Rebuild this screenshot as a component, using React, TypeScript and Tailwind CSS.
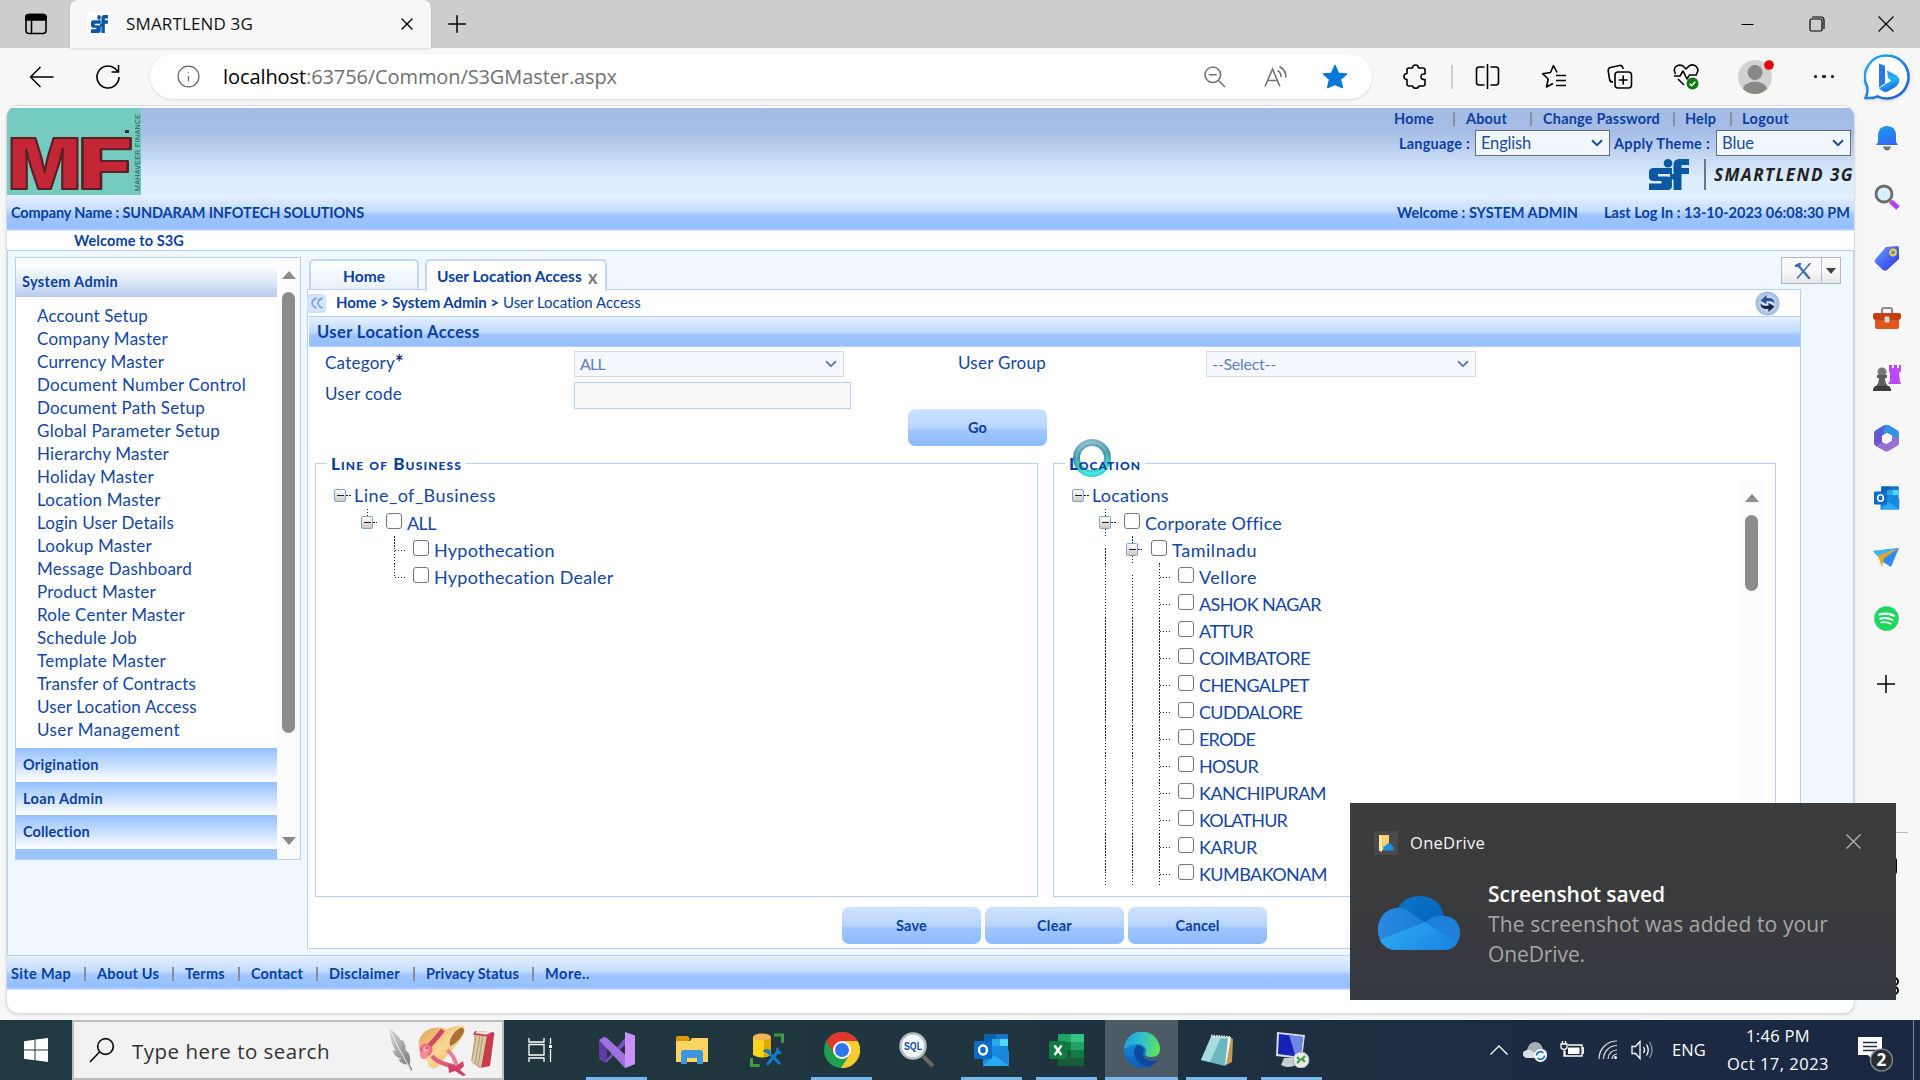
import React, { useLayoutEffect, useRef, useState } from "react";
import { X, Plus, Info, Minus } from "lucide-react";

/** Text run whose tracking is adjusted so it spans the given width. */
function Fit({ w, className = "", children }: { w: number; className?: string; children: string }) {
  const ref = useRef<HTMLSpanElement>(null);
  const [ls, setLs] = useState(0);
  useLayoutEffect(() => {
    if (ref.current) {
      const natural = ref.current.getBoundingClientRect().width;
      setLs((w - natural) / children.length);
    }
  }, [w, children]);
  return (
    <span className={"block shrink-0 whitespace-nowrap " + className} style={{ width: w }}>
      <span ref={ref} style={{ letterSpacing: ls }}>{children}</span>
    </span>
  );
}

const Sep = () => <span className="h-[14px] w-[2px] shrink-0 bg-[#8a8f99]" />;

function Chevron({ className = "" }: { className?: string }) {
  return (
    <svg className={className} width="12" height="8" viewBox="0 0 12 8" fill="none" stroke="currentColor" strokeWidth="2">
      <path d="M1 1.200l5 5 5-5" />
    </svg>
  );
}

/* ---------- browser chrome ---------- */

function SfMark({ w, h }: { w: number; h: number }) {
  return (
    <svg width={w} height={h} viewBox="0 0 40 31" preserveAspectRatio="none" fill="#0a58a2">
      <path d="M5 9h18v6H9v2.500h9q5 0 5 4.500v5q0 4-5 4H0v-6.500h12.500V22H5q-5 0-5-4v-5q0-4 5-4z" />
      <circle cx="19" cy="4.300" r="4.300" />
      <path d="M24.500 31V20.500H21V15h3.500V6q0-6 6-6H40v6h-7.500V9H40v6h-7.500v16z" />
    </svg>
  );
}

function TabStrip() {
  return (
    <div className="flex h-[48px] bg-[#cdcdcd]">
      <div className="flex w-[70px] items-center justify-center pl-[2px]">
        <svg width="22" height="22" viewBox="0 0 22 22" fill="none" stroke="#000" strokeWidth="1.600">
          <rect x="1" y="1.500" width="20" height="19" rx="3" />
          <path d="M1 7V4q0-2.500 3-2.500h14q3 0 3 2.500v3z" fill="#000" />
          <path d="M6.500 7v13" />
        </svg>
      </div>
      <div className="flex w-[361px] items-center rounded-t-[8px] bg-[#f7f7f7] pl-[17px] shadow">
        <span className="flex h-[24px] w-[24px] items-center justify-center bg-white"><SfMark w={17} h={18} /></span>
        <Fit w={127} className="ml-[15px] text-[17px] text-[#111]">SMARTLEND 3G</Fit>
        <X className="ml-[144px]" size={20} strokeWidth={1.6} />
      </div>
      <Plus className="ml-[12px] mt-[10px]" size={28} strokeWidth={1.3} />
      <div className="ml-auto flex items-center">
        <div className="flex w-[69px] justify-center"><Minus size={19} strokeWidth={1.3} /></div>
        <div className="flex w-[69px] justify-center">
          <svg width="16" height="16" viewBox="0 0 16 16" fill="none" stroke="#000" strokeWidth="1.200">
            <rect x="1" y="3" width="12" height="12" rx="1.500" /><path d="M3 1h9q3 0 3 3v9" />
          </svg>
        </div>
        <div className="flex w-[69px] justify-center">
          <svg width="16" height="16" viewBox="0 0 16 16" stroke="#000" strokeWidth="1.200"><path d="M.5.5l15 15M15.500.5l-15 15" /></svg>
        </div>
      </div>
    </div>
  );
}

function BingIcon() {
  return (
    <svg width="46" height="46" viewBox="0 0 46 46" className="drop-shadow">
      <defs>
        <linearGradient id="bg1" x1="0" y1="0" x2="1" y2="1"><stop offset="0" stopColor="#18b5ee" /><stop offset="1" stopColor="#2352d8" /></linearGradient>
        <linearGradient id="bg2" x1="0" y1="0" x2="0.4" y2="1"><stop offset="0" stopColor="#2b8df5" /><stop offset="0.6" stopColor="#20b6ee" /><stop offset="1" stopColor="#2166e8" /></linearGradient>
      </defs>
      <path d="M23 1.500a21.500 21.500 0 1 1-9.500 40.800c-3 1.600-7.500 2-12 1.600 2-3 2.400-6 1.800-11A21.500 21.500 0 0 1 23 1.500z" fill="#fff" stroke="url(#bg1)" strokeWidth="2.500" />
      <path d="M15 9.500l6 2.200v17.500l-6 4.200z" fill="#2c77ee" />
      <path d="M23 16.500l9 4.500q4 2.500 3 7-1 3.500-4 5.300l-7 4q-3 1.500-6-.5l-3-2.500 12-7.500-3-3z" fill="url(#bg2)" />
    </svg>
  );
}

function Toolbar() {
  return (
    <div className="flex h-[57px] items-center bg-[#f7f7f7] text-black">
      <div className="flex w-[84px] justify-center pr-[1px]">
        <svg width="25" height="22" viewBox="0 0 25 22" fill="none" stroke="#000" strokeWidth="1.500"><path d="M24.500 11H1.500M11.500 1L1.500 11l10 10" /></svg>
      </div>
      <div className="flex w-[48px] justify-center">
        <svg width="26" height="26" viewBox="0 0 26 26" fill="none" stroke="#000" strokeWidth="1.600"><path d="M24 13a11 11 0 1 1-4.300-8.700L23 7.500M23.500 1v7H16.500" /></svg>
      </div>
      <div className="ml-[18px] flex h-[45px] w-[1222px] items-center rounded-full bg-white pl-[26px] shadow-sm">
        <Info size={25} strokeWidth={1.2} className="text-[#666]" />
        <div className="ml-[22px] flex text-[20px]">
          <Fit w={83} className="text-black">localhost</Fit>
          <Fit w={311} className="text-[#707070]">:63756/Common/S3GMaster.aspx</Fit>
        </div>
        <div className="ml-auto flex items-center">
          <div className="flex w-[60px] justify-center">
            <svg width="22" height="22" viewBox="0 0 22 22" fill="none" stroke="#707070" strokeWidth="1.500"><circle cx="8.800" cy="8.800" r="7.800" /><path d="M14.500 14.500l6.500 6.500M4.800 8.800h8" /></svg>
          </div>
          <div className="flex w-[60px] justify-center pl-[1px]">
            <svg width="24" height="23" viewBox="0 0 24 23" fill="none" stroke="#707070" strokeWidth="1.500">
              <path d="M1 21.500L8.500 4 16 21.500M4 15.500h9.500M13.500 5.500q3.500 2 3.500 6.500M15.500 1.500q6.500 3.500 6.500 11" />
            </svg>
          </div>
          <div className="mr-[7px] flex w-[60px] justify-center">
            <svg width="26" height="25" viewBox="0 0 26 25" fill="#0078d9" stroke="#0078d9" strokeWidth="1.500" strokeLinejoin="round"><path d="M13 1.500l3.400 7.700 8.100.8-6.100 5.400 1.900 8.100-7.300-3.200-7.300 3.200 1.900-8.100L1.500 10l8.100-.8z" /></svg>
          </div>
        </div>
      </div>
      <div className="ml-[10px] flex w-[66px] justify-center pl-[1px]">
        <svg width="25" height="25" viewBox="0 0 25 25" fill="none" stroke="#000" strokeWidth="1.600" strokeLinejoin="round">
          <path d="M6 4h3.500q0-3 3-3t3 3H20q2 0 2 2v4q-4-.5-4 2.700T22 15.500V20q0 2-2 2h-4q-.5 2.300-3.200 2.300T9.500 22H6q-2 0-2-2v-4.500q-3 0-3-3t3-3V6q0-2 2-2z" />
        </svg>
      </div>
      <div className="flex w-[8px] justify-center"><span className="h-[24px] w-[1.500px] bg-[#cfcfcf]" /></div>
      <div className="flex w-[62px] justify-center">
        <svg width="25" height="25" viewBox="0 0 25 25" fill="none" stroke="#000" strokeWidth="1.600"><path d="M9.500 3H4Q1.500 3 1.500 5.500v13Q1.500 21 4 21h5.500M15.500 3H21q2.500 0 2.500 2.500v13q0 2.500-2.500 2.500h-5.500M12.500 0v25" /></svg>
      </div>
      <div className="flex w-[72px] justify-center">
        <svg width="26" height="25" viewBox="0 0 26 25" fill="none" stroke="#000" strokeWidth="1.600" strokeLinejoin="round"><path d="M16 8.500L12.500 1.500 9.500 8.500l-8 1.200 5.700 5.300L5.500 23l6.500-3.500M15 11.500h10M15 16.500h10M15 21.500h10" /></svg>
      </div>
      <div className="flex w-[60px] justify-center">
        <svg width="26" height="25" viewBox="0 0 26 25" fill="none" stroke="#000" strokeWidth="1.600">
          <path d="M6 18q-3 0-3.400-2.500L1.200 7Q1 4 3.500 3.500l9-2Q15 1 15.800 3.500L16 5" />
          <rect x="8" y="8" width="16.500" height="16" rx="3" /><path d="M16.200 11.500v9M11.700 16h9" />
        </svg>
      </div>
      <div className="flex w-[72px] justify-center">
        <svg width="26" height="27" viewBox="0 0 26 27" fill="none" stroke="#000" strokeWidth="1.600" strokeLinejoin="round">
          <path d="M2.500 11Q0 6 3 3.500T10 3l3 3 3-3q4-2.500 7.200.5T23.500 11M1 13h6l3-5 4 8 2.500-4H24M5 16l6 6" />
          <circle cx="19.500" cy="20.500" r="6" fill="#107c10" stroke="none" /><path d="M16.700 20.700l2 2 3.500-4" stroke="#fff" />
        </svg>
      </div>
      <div className="flex w-[66px] justify-center">
        <svg width="38" height="42" viewBox="0 0 38 42"><clipPath id="av"><circle cx="19" cy="21" r="17" /></clipPath>
          <circle cx="19" cy="21" r="17" fill="#d3d1ce" /><g clipPath="url(#av)" fill="#8a8886"><circle cx="19" cy="16.500" r="7.500" /><ellipse cx="19" cy="35" rx="12.500" ry="9.500" /></g>
          <circle cx="33" cy="9" r="4.800" fill="#e3000f" />
        </svg>
      </div>
      <div className="flex w-[72px] justify-center gap-[5px]">
        <span className="size-[3.500px] rounded-full bg-black" /><span className="size-[3.500px] rounded-full bg-black" /><span className="size-[3.500px] rounded-full bg-black" />
      </div>
      <div className="flex w-[54px] justify-center"><BingIcon /></div>
    </div>
  );
}

/* ---------- application header ---------- */

function ThemeSelect({ label, w }: { label: string; w: number }) {
  return (
    <div className="flex h-[26px] w-[135px] items-center justify-between border border-[#6b6b6b] bg-[#f0f7ff] pl-[5px] pr-[6px] text-[16.500px] text-[#1a4aa0]">
      <Fit w={w}>{label}</Fit>
      <Chevron />
    </div>
  );
}

function Banner() {
  return (
    <div className="flex h-[87px] justify-between bg-[linear-gradient(180deg,#a3bbe5_0%,#a6bee7_28%,#c9dcf5_60%,#ddeeff_82%,#ddeeff_100%)]">
      <svg width="134" height="87" viewBox="0 0 134 87" className="overflow-visible">
        <rect width="134" height="87" fill="#76cbc0" />
        <g fontFamily="Inter" fontWeight="900" fontSize="70" fill="#c32637" stroke="#5a2024" strokeWidth="2" strokeLinejoin="round">
          <text x="1" y="80.500" textLength="73" lengthAdjust="spacingAndGlyphs">M</text>
          <text x="71" y="80.500" textLength="55" lengthAdjust="spacingAndGlyphs">F</text>
        </g>
        <text transform="translate(132.500 83) rotate(-90)" textLength="77" fontFamily="Liberation Sans" fontSize="7" fill="#245b55">MAHAVEER FINANCE</text>
        <rect x="118" y="22" width="4" height="3" fill="#333" />
      </svg>
      <div className="flex flex-col items-end">
        <div className="flex h-[22px] items-center text-[14.500px] font-bold text-[#0b3fa0]">
          <Fit w={40}>Home</Fit><span className="w-[19px]" /><Sep />
          <Fit w={41} className="ml-[11px]">About</Fit><span className="w-[23px]" /><Sep />
          <Fit w={117} className="ml-[11px]">Change Password</Fit><span className="w-[13px]" /><Sep />
          <Fit w={31} className="ml-[10px]">Help</Fit><span className="w-[14px]" /><Sep />
          <Fit w={47} className="ml-[10px] mr-[65px]">Logout</Fit>
        </div>
        <div className="flex h-[26px] items-center pr-[3px] text-[14.500px] font-bold text-[#0b3fa0]">
          <Fit w={71} className="mt-[2px]">Language :</Fit>
          <span className="ml-[5px] font-normal"><ThemeSelect label="English" w={50} /></span>
          <Fit w={96} className="ml-[4px] mr-[1px] mt-[2px]">Apply Theme :</Fit>
          <span className="ml-[5px] font-normal"><ThemeSelect label="Blue" w={32} /></span>
        </div>
        <div className="mt-[3px] flex h-[31px] items-center">
          <SfMark w={40} h={31} />
          <span className="ml-[15px] h-[31px] w-[2px] bg-[#6d7682]" />
          <Fit w={140} className="ml-[8px] font-['Open_Sans'] text-[17px] font-bold italic text-[#222]">SMARTLEND 3G</Fit>
        </div>
      </div>
    </div>
  );
}

const barBg = "bg-[linear-gradient(180deg,#e6f0ff_0%,#c6defe_42%,#b4d2fd_50%,#9fc6ff_56%,#93bfff_92%,#b9d6ff_97%,#e4f0ff_100%)]";

function CompanyBar() {
  return (
    <div className={"flex h-[36px] items-center pl-[4px] pr-[4px] text-[14.500px] font-bold text-[#0b3fa0] " + barBg}>
      <Fit w={353}>Company Name : SUNDARAM INFOTECH SOLUTIONS</Fit>
      <Fit w={181} className="ml-auto">Welcome : SYSTEM ADMIN</Fit>
      <Fit w={246} className="ml-[26px]">Last Log In : 13-10-2023 06:08:30 PM</Fit>
    </div>
  );
}

/* ---------- navigation panel ---------- */

const menu: [string, number][] = [
  ["Account Setup", 111], ["Company Master", 131], ["Currency Master", 127], ["Document Number Control", 209],
  ["Document Path Setup", 168], ["Global Parameter Setup", 183], ["Hierarchy Master", 132], ["Holiday Master", 117],
  ["Location Master", 124], ["Login User Details", 137], ["Lookup Master", 115], ["Message Dashboard", 155],
  ["Product Master", 119], ["Role Center Master", 148], ["Schedule Job", 100], ["Template Master", 129],
  ["Transfer of Contracts", 159], ["User Location Access", 160], ["User Management", 143],
];

function SideNav() {
  const head = "flex shrink-0 items-center bg-linear-to-b from-[#93bffd] to-white pl-[7px] text-[14.500px] font-bold text-[#0b3fa0]";
  return (
    <div className="ml-[7px] mt-[6px] flex h-[603px] w-[286px] border border-[#b5d0fc] bg-white">
      <div className="flex w-[261px] flex-col overflow-hidden">
        <div className="mt-[7px] flex h-[32px] shrink-0 items-center bg-linear-to-b from-[#fbfdff] via-[#dfe9f7] to-[#b6cbee] pl-[6px] pt-[2px] text-[14.500px] font-bold text-[#0b3fa0]">
          <Fit w={96}>System Admin</Fit>
        </div>
        <div className="h-[451px] shrink-0 pl-[21px] pt-[7px] text-[17px] text-[#1346a2]">
          {menu.map(([t, w]) => (
            <div key={t} className="flex h-[23px] items-center"><Fit w={w}>{t}</Fit></div>
          ))}
        </div>
        <div className={head + " h-[34px]"}><Fit w={76}>Origination</Fit></div>
        <div className={head + " h-[33px]"}><Fit w={80}>Loan Admin</Fit></div>
        <div className={head + " h-[34px]"}><Fit w={67}>Collection</Fit></div>
        <div className="h-[10px] bg-[#9bc4fd]" />
      </div>
      <div className="flex flex-1 flex-col items-center bg-[#fcfcfc]">
        <span className="mt-[13px] border-x-[7.500px] border-b-[8px] border-x-transparent border-b-[#8b8b8b]" />
        <span className="mt-[13px] h-[441px] w-[13px] rounded-full bg-[#8b8b8b]" />
        <span className="mt-[104px] border-x-[7.500px] border-t-[8px] border-x-transparent border-t-[#8b8b8b]" />
      </div>
    </div>
  );
}

/* ---------- tree view ---------- */

type Guide = "none" | "full" | "lower" | "tee" | "end" | "nodeTop" | "nodeBoth" | "root";

function GuideCell({ kind }: { kind: Guide }) {
  const v = "w-[1px] bg-[repeating-linear-gradient(180deg,#222_0_1.500px,#fff_1.500px_3px)]";
  const hz = "h-[1px] bg-[repeating-linear-gradient(90deg,#222_0_1.500px,#fff_1.500px_3px)]";
  if (kind === "none") return <span className="w-[27px]" />;
  if (kind === "full") return <span className="flex h-full w-[27px] pl-[13px]"><span className={"h-full " + v} /></span>;
  if (kind === "lower") return <span className="flex h-full w-[27px] items-end pl-[13px]"><span className={"h-[15px] " + v} /></span>;
  if (kind === "tee" || kind === "end")
    return (
      <span className="flex h-full w-[27px] pl-[13px]">
        <span className={(kind === "tee" ? "h-full " : "h-[15px] ") + v} />
        <span className={"mt-[14px] w-[11px] " + hz} />
      </span>
    );
  return (
    <span className="grid h-full w-[27px] grid-cols-[7px_12px_8px] grid-rows-[7px_13px_7px]">
      <span className="col-start-2 row-start-1 flex pl-[6px]">{kind !== "root" && <span className={"h-full " + v} />}</span>
      <span className="col-start-2 row-start-2 flex items-center justify-center rounded-[2px] border border-[#7fa6d3] bg-linear-to-b from-white to-[#ccc9be]">
        <span className="h-[1.500px] w-[7px] bg-[#222]" />
      </span>
      <span className={"col-start-3 row-start-2 mt-[6px] w-[5px] " + hz} />
      <span className="col-start-2 row-start-3 flex pl-[6px]">{kind === "nodeBoth" && <span className={"h-full " + v} />}</span>
    </span>
  );
}

function TreeRow({ guides, label, w }: { guides: Guide[]; label: string; w: number }) {
  const root = guides[0] === "root";
  return (
    <div className="flex h-[27px] shrink-0">
      {guides.map((g, i) => <GuideCell key={i} kind={g} />)}
      {!root && <span className="ml-[5px] mt-[4px] size-[16px] shrink-0 rounded-[3px] border-[1.500px] border-[#767676] bg-white" />}
      <Fit w={w} className={"text-[18px] leading-[24px] text-[#1346a2] " + (root ? "mt-[1px]" : "ml-[5px] mt-[2px]")}>{label}</Fit>
    </div>
  );
}

const towns: [string, number][] = [
  ["ASHOK NAGAR", 122], ["ATTUR", 54], ["COIMBATORE", 111], ["CHENGALPET", 110], ["CUDDALORE", 103], ["ERODE", 56],
  ["HOSUR", 59], ["KANCHIPURAM", 127], ["KOLATHUR", 88], ["KARUR", 58], ["KUMBAKONAM", 128],
];

const legendText = "text-[17px] font-black leading-[22px] text-[#0b3fa0] [font-variant:small-caps]";

function Panel({ title, w, ring, children }: { title: string; w: number; ring?: React.ReactNode; children: React.ReactNode }) {
  return (
    <div className="relative flex h-[434px] w-[723px] border border-[#b5d0fc]">
      <span className="absolute -top-[2px] left-[11px] h-[4px] bg-white" style={{ width: w + 8 }} />
      {ring}
      <Fit w={w} className={"absolute -top-[11px] left-[15px] " + legendText}>{title}</Fit>
      {children}
    </div>
  );
}

function BusyRing() {
  return (
    <svg className="absolute left-[18px] -top-[26px]" width="40" height="40" viewBox="0 0 40 40">
      <defs><linearGradient id="sp" x1="0" y1="0" x2="0.200" y2="1"><stop offset="0" stopColor="#86b3cf" /><stop offset="0.500" stopColor="#3c94a0" /><stop offset="1" stopColor="#35dcd3" /></linearGradient></defs>
      <circle cx="20" cy="20" r="15.500" fill="none" stroke="url(#sp)" strokeWidth="7" />
      <circle cx="20" cy="20" r="15.500" fill="none" stroke="#d8f3f5" strokeOpacity="0.250" strokeWidth="2" />
    </svg>
  );
}

/* ---------- main form ---------- */

const FormSelect = ({ label, w }: { label: string; w: number }) => (
  <div className="flex h-[26px] w-[270px] items-center justify-between border border-[#d5dbe6] bg-[#f5f9ff] pb-[1px] pl-[5px] pr-[6px] text-[16px] text-[#5c7fbf]">
    <Fit w={w}>{label}</Fit>
    <Chevron className="mt-[1px]" />
  </div>
);

const Btn = ({ label, w }: { label: string; w: number }) => (
  <button className="flex h-[37px] w-[139px] items-center justify-center rounded-[7px] bg-[linear-gradient(180deg,#cfe2ff_0%,#b7d4fe_52%,#a0c6ff_56%,#8ebbff_100%)] text-[14.500px] font-bold text-[#0b3fa0]">
    <Fit w={w}>{label}</Fit>
  </button>
);

function MainForm() {
  return (
    <div className="h-[660px] w-[1494px] border border-[#b5d0fc] bg-white">
      <div className="flex h-[27px] items-center border-b border-[#b5d0fc] text-[15px] text-[#0b3fa0]">
        <span className="-ml-[1px] flex h-[19px] w-[19px] items-center justify-center rounded-[4px] border border-[#c9dcf8] bg-[#d6e5fc]">
          <svg width="14" height="12" viewBox="0 0 14 12" fill="none" stroke="#8aa9dc" strokeWidth="2"><path d="M6.500 1Q2 3 2 6t4.500 5M12.500 1Q8 3 8 6t4.500 5" /></svg>
        </span>
        <Fit w={163} className="-mt-[1px] ml-[10px] font-bold">{"Home > System Admin >"}</Fit>
        <Fit w={138} className="-mt-[1px] ml-[4px]">User Location Access</Fit>
        <svg className="ml-auto mr-[20px]" width="25" height="25" viewBox="0 0 25 25">
          <defs><radialGradient id="rf"><stop offset="0.3" stopColor="#d9e6f8" /><stop offset="1" stopColor="#9db8e0" /></radialGradient></defs>
          <circle cx="12.500" cy="12.500" r="12" fill="url(#rf)" />
          <path d="M5.500 9.500l6-5.500v3h3.500q4.500 1 4.500 5.500-2-2.500-5-2.300h-3v3z" fill="#2c5490" />
          <path d="M19.500 15.500l-6 5.500v-3H10q-4.500-1-4.500-5.500 2 2.500 5 2.300h3v-3z" fill="#16294d" />
        </svg>
      </div>
      <div className="ml-[1px] flex h-[30px] items-center bg-[linear-gradient(180deg,#e6f0ff_0%,#bdd9fe_52%,#9fc6ff_60%,#96c1ff_94%,#b9d6ff_100%)] pl-[8px] pt-[1px] text-[16.500px] font-bold text-[#0b3fa0]">
        <Fit w={163}>User Location Access</Fit>
      </div>
      <div className="ml-[17px] mt-[4px] grid grid-cols-[249px_384px_248px_270px] gap-y-[5px] text-[17px] leading-[24px] text-[#1346a2]">
        <div className="flex"><Fit w={70}>Category</Fit><span className="-mt-[1px] text-[20px] font-bold text-[#1a1a8c]">*</span></div>
        <FormSelect label="ALL" w={25} />
        <Fit w={88}>User Group</Fit>
        <FormSelect label="--Select--" w={64} />
        <Fit w={77}>User code</Fit>
        <div className="h-[27px] w-[277px] border border-[#b5d0fc] bg-[#fafafa]" />
      </div>
      <div className="ml-[600px]"><Btn label="Go" w={19} /></div>
      <div className="ml-[7px] mt-[17px] flex gap-[15px]">
        <Panel title="Line of Business" w={131}>
          <div className="ml-[11px] mt-[18px]">
            <TreeRow guides={["root"]} label="Line_of_Business" w={142} />
            <TreeRow guides={["none", "nodeTop"]} label="ALL" w={29} />
            <TreeRow guides={["none", "none", "tee"]} label="Hypothecation" w={121} />
            <TreeRow guides={["none", "none", "end"]} label="Hypothecation Dealer" w={180} />
          </div>
        </Panel>
        <Panel title="Location" w={72} ring={<BusyRing />}>
          <div className="ml-[11px] mt-[18px] h-[404px] flex-1 overflow-hidden">
            <TreeRow guides={["root"]} label="Locations" w={77} />
            <TreeRow guides={["none", "nodeBoth"]} label="Corporate Office" w={136} />
            <TreeRow guides={["none", "lower", "nodeBoth"]} label="Tamilnadu" w={85} />
            <TreeRow guides={["none", "full", "lower", "tee"]} label="Vellore" w={58} />
            {towns.map(([t, w]) => <TreeRow key={t} guides={["none", "full", "full", "tee"]} label={t} w={w} />)}
          </div>
          <div className="mr-[12px] mt-[17px] flex h-[404px] w-[23px] flex-col items-center bg-[#fcfcfc]">
            <span className="mt-[13px] border-x-[7.500px] border-b-[8px] border-x-transparent border-b-[#8b8b8b]" />
            <span className="mt-[13px] h-[76px] w-[13px] rounded-full bg-[#8b8b8b]" />
          </div>
        </Panel>
      </div>
      <div className="ml-[534px] mt-[10px] flex gap-[4px]">
        <Btn label="Save" w={31} /><Btn label="Clear" w={35} /><Btn label="Cancel" w={44} />
      </div>
    </div>
  );
}

function Workspace() {
  return (
    <div className="flex h-[706px] border border-[#b5d0fc] bg-[#eff7ff]">
      <SideNav />
      <div className="ml-[6px] flex flex-1 flex-col">
        <div className="flex h-[38px] items-end pl-[2px] text-[15.500px] font-bold text-[#0b3fa0]">
          <div className="flex h-[30px] w-[110px] items-center justify-center rounded-t-[5px] border-2 border-b-0 border-[#c0d7fb] bg-linear-to-b from-white to-[#e8f1f8] pt-[3px]"><Fit w={42}>Home</Fit></div>
          <div className="relative -mb-[2px] ml-[6px] flex h-[32px] w-[182px] items-center rounded-t-[5px] border-2 border-b-0 border-[#c0d7fb] bg-white pl-[10px] pt-[1px]">
            <Fit w={145}>User Location Access</Fit>
            <span className="ml-[6px] text-[18px] leading-none text-[#777]">x</span>
          </div>
          <div className="mb-[5px] ml-auto mr-[12px] flex h-[27px] w-[60px] border border-[#b4b8bd] bg-linear-to-b from-[#fafafa] from-50% to-[#e6e6e6]">
            <span className="flex w-[40px] items-center justify-center border-r border-[#b4b8bd]">
              <svg className="ml-[3px]" width="18" height="18" viewBox="0 0 18 18" fill="none" stroke="#3a6fb5" strokeLinecap="round"><path d="M4 3l11 13" strokeWidth="2.400" /><path d="M16 1.500L3.500 16" strokeWidth="1.600" /><path d="M2 4l4-2" strokeWidth="2.600" /></svg>
            </span>
            <span className="flex flex-1 items-center justify-center"><span className="border-x-[5px] border-t-[6px] border-x-transparent border-t-[#444]" /></span>
          </div>
        </div>
        <MainForm />
      </div>
    </div>
  );
}

const footer: [string, number][] = [
  ["Site Map", 60], ["About Us", 62], ["Terms", 40], ["Contact", 52], ["Disclaimer", 71], ["Privacy Status", 93], ["More..", 45],
];

function FooterBar() {
  return (
    <div className={"flex h-[34px] items-center pl-[4px] pt-[2px] text-[14.500px] font-bold text-[#0b3fa0] " + barBg}>
      {footer.map(([t, w], i) => (
        <React.Fragment key={t}>
          {i > 0 && <><span className="w-[13px]" /><Sep /><span className="w-[11px]" /></>}
          <Fit w={w}>{t}</Fit>
        </React.Fragment>
      ))}
    </div>
  );
}

/* ---------- Edge sidebar ---------- */

function OutlookGlyph({ size }: { size: number }) {
  return (
    <svg width={size} height={size} viewBox="0 0 36 36">
      <rect x="10" y="2" width="24" height="26" rx="1.500" fill="#1487d8" />
      <rect x="10" y="2" width="12" height="8" fill="#0b62b0" /><rect x="22" y="2" width="12" height="8" fill="#1c74c4" />
      <rect x="18" y="7" width="8" height="7" fill="#28a8ea" /><rect x="26" y="7" width="8" height="7" fill="#50d9ff" /><rect x="18" y="14" width="8" height="7" fill="#1a8ae0" />
      <path d="M9 34h26V18L22 27l-13-7z" fill="#1b86dc" /><path d="M9 34h26L20 23z" fill="#2aa9f0" />
      <rect x="0" y="9" width="18" height="18" rx="1.500" fill="#0a6cc4" />
      <ellipse cx="9" cy="18" rx="4" ry="4.500" fill="none" stroke="#fff" strokeWidth="2.400" />
    </svg>
  );
}

function EdgeSidebar() {
  const c = "flex h-[60px] items-center justify-center pr-[2px]";
  return (
    <div className="flex flex-1 flex-col pt-[3px]">
      <div className={c}>
        <svg width="22" height="26" viewBox="0 0 22 26"><defs><linearGradient id="be" x1="0" y1="0" x2="0.500" y2="1"><stop offset="0" stopColor="#1aa0e8" /><stop offset="1" stopColor="#2f6df3" /></linearGradient></defs>
          <path d="M11 1q9 0 9 10v6l2 3H0l2-3v-6Q2 1 11 1z" fill="url(#be)" /><path d="M7 21.500h8q-1 4-4 4t-4-4z" fill="#777" /></svg>
      </div>
      <div className={c}>
        <svg className="-mt-[2px]" width="26" height="26" viewBox="0 0 26 26"><path d="M15 16l3 3" stroke="#999" strokeWidth="3" /><path d="M17 17.500l7 6.500" stroke="#b43cf7" strokeWidth="5" /><circle cx="10" cy="10" r="8" fill="#d9f0fb" stroke="#6b6b6b" strokeWidth="2.800" /></svg>
      </div>
      <div className={c}>
        <svg width="26" height="26" viewBox="0 0 26 26"><defs><linearGradient id="tg" x1="0" y1="0" x2="1" y2="1"><stop offset="0" stopColor="#6ba4fb" /><stop offset="1" stopColor="#2c2ce8" /></linearGradient></defs>
          <path d="M12 2l11-1q2 0 2 2v11L13 25q-2 1.500-4 0L1.500 18q-1.500-2 0-4z" fill="url(#tg)" /><circle cx="19" cy="7.500" r="3" fill="#6e8be8" stroke="#ffd21f" strokeWidth="1.800" /></svg>
      </div>
      <div className={c}>
        <svg width="28" height="24" viewBox="0 0 28 24"><path d="M9 8V4q0-2 2-2h6q2 0 2 2v4" fill="none" stroke="#8c8c8c" strokeWidth="2.200" /><rect x="2" y="10" width="24" height="13" rx="2" fill="#e0561c" /><path d="M2 7h24q2 0 2 2v2q0 3-3 3H3q-3 0-3-3V9q0-2 2-2z" fill="#c33f10" /><rect x="11.500" y="10.500" width="5" height="6" rx="1" fill="#d6d6d6" /></svg>
      </div>
      <div className={c}>
        <svg width="28" height="28" viewBox="0 0 28 28"><path d="M16 1h3v3h2V1h3v3h2V1h2v6l-2 2 1 8 1 3H15l2-3V9l-1-2z" fill="#b94af5" />
          <circle cx="9" cy="8" r="4.500" fill="#777" /><path d="M4 11h10v3h-2q0 5 3 8H3q3-3 3-8H4z" fill="#5c5c5c" /><path d="M2 22h14l2 3v2H0v-2z" fill="#3c3c3c" /></svg>
      </div>
      <div className={c}>
        <svg width="25" height="28" viewBox="0 0 25 28">
          <defs><linearGradient id="m3" x1="0" y1="0" x2="0" y2="1"><stop offset="0" stopColor="#4a63d8" /><stop offset="1" stopColor="#7a4fc0" /></linearGradient></defs>
          <path d="M10.500 1L2 6Q0 7 0 9.500V19q0 2 2 3l3.500 2 2.500-4.500V12l5-3.500L12 1z" fill="url(#m3)" />
          <path d="M11 1.200q2-1 4.500.2L23 6q2 1 2 3.500v8.500l-7-3.500v-3L12.500 8.500 9 10.500z" fill="#3193e4" />
          <path d="M25 15v4q0 2-2 3l-8.500 5q-2 1-4 0L2 22l6-4 4.500 2 5.500-3.500V12z" fill="#9a70d2" />
          <path d="M12.500 9.500l4.500 2.500v4.500l-4.500 3-4.500-3V12z" fill="#f7f7f7" />
        </svg>
      </div>
      <div className={c}><OutlookGlyph size={26} /></div>
      <div className={c}>
        <svg width="27" height="20" viewBox="0 0 27 20"><path d="M0 3l26-3-8 19-8-5z" fill="#2e8df0" /><path d="M0 3l26-3L6 9z" fill="#39b6f6" /><path d="M5 8L26 0 11 10l-2 9z" fill="#f4a41c" /></svg>
      </div>
      <div className={c}>
        <svg width="25" height="25" viewBox="0 0 25 25" fill="none" stroke="#fff" strokeLinecap="round"><circle cx="12.500" cy="12.500" r="12.300" fill="#1ed760" stroke="none" /><path d="M5.500 8.500q8-2.200 14.500 1.300" strokeWidth="2.300" /><path d="M6.300 12.700q6.500-1.800 12 1.300" strokeWidth="2" /><path d="M7 16.500q5.200-1.300 9.800 1.200" strokeWidth="1.700" /></svg>
      </div>
      <div className="flex h-[72px] items-center justify-center pr-[3px]">
        <svg width="18" height="18" viewBox="0 0 18 18" stroke="#000" strokeWidth="1.500"><path d="M9 0v18M0 9h18" /></svg>
      </div>
      <div className="ml-[23px] mt-[112px] h-[1px] w-[30px] bg-[#bdbdbd]" />
      <div className="ml-[22px] mt-[25px] h-[16px] w-[20px] rounded-[2px] border-2 border-black" />
      <div className="ml-[24px] mt-[103px] flex flex-col"><span className="h-[9px] w-[20px] rounded-full border-2 border-black" /><span className="h-[9px] w-[20px] rounded-full border-2 border-black" /></div>
    </div>
  );
}

/* ---------- notification ---------- */

function Toast() {
  return (
    <div className="absolute left-[1350px] top-[803px] h-[197px] w-[546px] bg-linear-to-b from-[#3c3c3c] via-[#3a3b3c] to-[#343842] pl-[24px] pr-[35px]">
      <div className="flex items-center pt-[28px]">
        <span className="flex size-[24px] items-center justify-center bg-[#4a4a4a]">
          <svg width="16" height="17" viewBox="0 0 16 17"><path d="M1 0h10v15H4l-1 2-2-2z" fill="#fbd16b" /><path d="M1 0l3 2v15l-3-2z" fill="#ffe9a8" /><path d="M7 15.500q-2-.5-2-2.500t3-2.500q1-3 4-2 2 .5 2 2.500 2 .5 2 2.500t-2 2z" fill="#1e90e0" /></svg>
        </span>
        <Fit w={75} className="ml-[12px] text-[16.500px] text-[#f5f5f5]">OneDrive</Fit>
        <svg className="-mt-[3px] ml-auto" width="15" height="15" viewBox="0 0 15 15" stroke="#b5b5b5" strokeWidth="1.300"><path d="M.5.5l14 14M14.500.5l-14 14" /></svg>
      </div>
      <div className="mt-[23px] flex">
        <svg className="ml-[3px] mt-[17px]" width="84" height="56" viewBox="0 0 84 56">
          <defs>
            <linearGradient id="c1" x1="0" y1="0" x2="1" y2="1"><stop offset="0" stopColor="#0a7ac8" /><stop offset="1" stopColor="#0458b4" /></linearGradient>
            <linearGradient id="c2" x1="0" y1="0" x2="1" y2="0"><stop offset="0" stopColor="#2b8be0" /><stop offset="1" stopColor="#0f6cc8" /></linearGradient>
            <linearGradient id="c3" x1="0" y1="0" x2="1" y2="0.400"><stop offset="0" stopColor="#2fb2f2" /><stop offset="1" stopColor="#1c87e2" /></linearGradient>
            <clipPath id="cl"><path d="M21 54Q7 54 3 44-3 28 8 17q6-5 13-5Q28 0 43 0q20 1 24 20 15 1 16 17-1 16-16 17z" /></clipPath>
          </defs>
          <g clipPath="url(#cl)">
            <rect width="84" height="56" fill="url(#c1)" />
            <path d="M0 12h21q7 0 12 4l50 34v6H0z" fill="url(#c2)" />
            <path d="M48 26q10-8 20-6 15 1 16 17v18L44 40z" fill="#1d80da" />
            <path d="M3 44l45-18 33 22v8H0z" fill="url(#c3)" />
          </g>
        </svg>
        <div className="ml-[27px] text-[21px] leading-[30px] text-[#a6a6a6]">
          <Fit w={177} className="font-semibold text-white">Screenshot saved</Fit>
          <Fit w={340}>The screenshot was added to your</Fit>
          <Fit w={97}>OneDrive.</Fit>
        </div>
      </div>
    </div>
  );
}

/* ---------- taskbar ---------- */

function SearchArt() {
  return (
    <svg className="ml-auto mr-[7px]" width="108" height="52" viewBox="0 0 108 52">
      <defs>
        <linearGradient id="ft" x1="0" y1="0" x2="1" y2="1"><stop offset="0" stopColor="#d9d9d9" /><stop offset="1" stopColor="#6e6e6e" /></linearGradient>
        <linearGradient id="ht" x1="0" y1="0" x2="1" y2="1"><stop offset="0" stopColor="#e09c4e" /><stop offset="0.500" stopColor="#fbd893" /><stop offset="1" stopColor="#e8b45f" /></linearGradient>
      </defs>
      <path d="M2.500 5q8 5 11 11l3 1q3 6 2 9l3 3q3 7 1 11l3 6-2 .5-3-6q-6 0-9-5l3-1q-7-1-9-8l3 0q-5-7-6-21.500z" fill="url(#ft)" />
      <path d="M4 8q7 16 20 38" stroke="#f4f4f4" strokeWidth=".9" fill="none" />
      <path d="M32 17Q34 8 44 4.500q7-2 16 .5Q71 0 77 2q3 5-4 14-6 9-12 14-6 8-10 13-5 2-9 0-1-6-7-13-4-6-3-13z" fill="url(#ht)" />
      <path d="M76 3.500q3 4-3 11-5 6-10 7.500-2-5 4-13 4-5 9-5.500z" fill="#a9713a" />
      <path d="M56 6Q48 16 41 23" stroke="#d04a66" strokeWidth="5" fill="none" />
      <path d="M45 32q6 8 26 11" stroke="#dc5f7c" strokeWidth="4.500" fill="none" /><path d="M60 26q8 6 10 18" stroke="#e8809a" strokeWidth="4" fill="none" />
      <circle cx="39" cy="26" r="6.500" fill="#ee6d82" /><circle cx="37" cy="31" r="4" fill="#f48b9b" /><circle cx="39" cy="25" r="3" fill="#f9a9b4" /><circle cx="40" cy="24" r="1.200" fill="#d2405c" />
      <path d="M61 40l8 2 7-5 1 5-4 4 6 5-3 1-8-5-6 2z" fill="#cf4264" />
      <path d="M88 8l1-1 18 1.500q1 1 0 3L103 42l-10 2-8-6z" fill="#c93a4b" />
      <path d="M89 7l17 1.500-5 3-15-1z" fill="#efe6d0" /><path d="M88 8l12 3-6 33-9-6z" fill="#d9c9a6" /><path d="M89.500 10l-5 27M93 11l-5 29M96 11l-5 31" stroke="#a08a62" strokeWidth=".8" fill="none" />
      <path d="M89 7l-2 3 12 1.500 7-3" fill="none" stroke="#c02e52" strokeWidth="1.300" />
    </svg>
  );
}

function TaskIcon({ active = false, wide = false, children }: { active?: boolean; wide?: boolean; children: React.ReactNode }) {
  return (
    <div className="flex w-[75px] justify-center">
      <div className={"flex h-full flex-col items-center " + (wide ? "w-[73px] bg-[#4d5b67]" : "w-[61px]")}>
        <div className="flex h-[57px] items-center pt-[3px]">{children}</div>
        {active && <div className="h-[3px] w-full bg-[#76b9ed]" />}
      </div>
    </div>
  );
}

function Taskbar() {
  return (
    <div className="flex h-[60px] bg-[linear-gradient(90deg,#213940_0%,#1f353f_50%,#1c2b42_80%,#1b2743_100%)]">
      <div className="flex w-[72px] items-center justify-center">
        <svg width="24" height="24" viewBox="0 0 24 24" fill="#fff"><path d="M0 3.300l10.500-1.500v9.700H0zM11.500 1.600L24 0v11.500H11.500zM0 12.500h10.500v9.700L0 20.700zM11.500 12.500H24V24l-12.500-1.700z" /></svg>
      </div>
      <div className="flex w-[432px] items-center border-2 border-[#bdbdbd] bg-[#f2f2f2] pl-[15px]">
        <svg width="26" height="26" viewBox="0 0 26 26" fill="none" stroke="#111" strokeWidth="1.700"><circle cx="16.500" cy="9.500" r="7.800" /><path d="M10.500 15L1 25" /></svg>
        <Fit w={198} className="ml-[17px] mt-[3px] text-[20.500px] text-[#333]">Type here to search</Fit>
        <SearchArt />
      </div>
      <div className="flex w-[75px] items-center justify-center pr-[7px]">
        <svg className="ml-[4px]" width="24" height="24" viewBox="0 0 24 24" fill="none" stroke="#fff" strokeWidth="1.300"><path d="M1 0v4h15V0M1 24v-4h15v4M1 6.500h15v10.500H1zM22.500 0v6M22.500 11v13" /><rect x="21" y="7" width="3" height="3" fill="#fff" stroke="none" /></svg>
      </div>
      <TaskIcon active>
        <svg width="36" height="36" viewBox="0 0 36 36">
          <path d="M0 8l5-3 3 1v22l-3 2.500L0 27z" fill="#5f3a9e" />
          <path d="M5 30.500L26 6V0l10 3.500L8 30z" fill="#7c50bb" />
          <path d="M0 8l5-3 3 1 28 26-10 4z" fill="#a271e0" />
          <path d="M26 0l10 3.500v28.500L26 36z" fill="#c793fb" />
        </svg>
      </TaskIcon>
      <TaskIcon>
        <svg width="32" height="28" viewBox="0 0 32 28"><path d="M0 2q0-2 2-2h10l2 3-2 3H0z" fill="#d99a0b" /><path d="M0 5h14l2-3h16v24H0z" fill="#fcd462" /><path d="M5 28V17q0-3 3-3h16q3 0 3 3v11h-6v-6H11v6z" fill="#3a96dd" /></svg>
      </TaskIcon>
      <TaskIcon>
        <svg width="34" height="34" viewBox="0 0 34 34"><path d="M24 2h8.500v8M1.500 25v7.500h8" fill="none" stroke="#3f9c46" strokeWidth="3" /><path d="M3 4v18q9 5 18 0V4z" fill="#fbd41c" /><path d="M14 4h7v18q-3 2-7 2z" fill="#e0a800" /><ellipse cx="12" cy="4" rx="9" ry="3.500" fill="#f1b25c" /><path d="M17 18l13 13M29 17L17 32M14 19q2-3 6 0M28 15q-2 4 3 5" stroke="#1679c4" strokeWidth="3" fill="none" /></svg>
      </TaskIcon>
      <TaskIcon active>
        <svg width="36" height="36" viewBox="0 0 36 36"><circle cx="18" cy="18" r="18" fill="#1e9e4f" /><path d="M2.400 9A18 18 0 0 1 33.600 9H18L10 22z" fill="#e0372c" /><path d="M33.600 9A18 18 0 0 1 17 36l9-14-8-13z" fill="#fccb2f" /><circle cx="18" cy="18" r="9" fill="#fff" /><circle cx="18" cy="18" r="7" fill="#2f76ea" /></svg>
      </TaskIcon>
      <TaskIcon>
        <svg width="36" height="36" viewBox="0 0 36 36"><path d="M24 24l10 10" stroke="#6b6662" strokeWidth="4" /><circle cx="14" cy="14" r="12.500" fill="#f5f8fb" stroke="#b9bdc1" strokeWidth="2.500" /><text x="14" y="18" textAnchor="middle" textLength="18" lengthAdjust="spacingAndGlyphs" fontFamily="Liberation Sans" fontWeight="bold" fontSize="11.500" fill="#0d4f94">SQL</text></svg>
      </TaskIcon>
      <TaskIcon active>
        <OutlookGlyph size={36} />
      </TaskIcon>
      <TaskIcon active>
        <svg width="36" height="34" viewBox="0 0 36 34"><rect x="9" y="1" width="26" height="32" rx="1.500" fill="#21a366" /><rect x="22" y="1" width="13" height="8" fill="#33c481" /><rect x="9" y="9" width="13" height="8" fill="#107c41" /><rect x="9" y="17" width="26" height="16" fill="#185c37" /><rect x="22" y="17" width="13" height="8" fill="#107c41" /><rect y="8" width="18" height="18" rx="1.500" fill="#107c41" /><path d="M5.500 12.500l7 9.500M12.500 12.500l-7 9.500" stroke="#fff" strokeWidth="2.400" /></svg>
      </TaskIcon>
      <TaskIcon active wide>
        <svg width="36" height="36" viewBox="0 0 36 36">
          <defs><linearGradient id="e1" x1="0" y1="0.300" x2="1" y2="0.500"><stop offset="0" stopColor="#1f9fe0" /><stop offset="0.500" stopColor="#2ec3c9" /><stop offset="1" stopColor="#63e05c" /></linearGradient>
            <linearGradient id="e2" x1="0" y1="0" x2="0" y2="1"><stop offset="0" stopColor="#1aa0e2" /><stop offset="1" stopColor="#0f5cb8" /></linearGradient></defs>
          <circle cx="18" cy="18" r="18" fill="url(#e2)" /><path d="M0 18A18 18 0 0 1 36 17q0 8-9 8-6 0-6-3 2-2 1-5-2-5-9-5-9 0-13 6z" fill="url(#e1)" />
          <path d="M13 13q-5 5-2 12 4 9 14 10 6-2 9-8-10 4-14-2-2-3 0-6 0-6-7-6z" fill="#0d4ba0" /><path d="M36 18q0 7-8 7.500-6 0-7-3 0 5 6 6.500 5 0 9-2z" fill="#4d5b67" />
        </svg>
      </TaskIcon>
      <TaskIcon active>
        <svg width="34" height="34" viewBox="0 0 34 34"><path d="M29 4l4 2-1 23-6 3z" fill="#c59a52" /><path d="M12 3l19 1-5 29z" fill="#f0f4f5" /><path d="M11 4l17 1-3 28-24-6z" fill="#6cb6bf" /><path d="M11 4l10 .6L10 29l-9-2z" fill="#a8dbe0" /><path d="M11 3l19 1.500" stroke="#ddd" strokeWidth="3" strokeDasharray="1.500 1" /></svg>
      </TaskIcon>
      <TaskIcon active>
        <svg width="36" height="36" viewBox="0 0 36 36"><path d="M10 26h10l2 7q-8 4-15 0z" fill="#c9ccd0" /><path d="M3 0l28 3-3 24-26-3z" fill="#d7dbe0" /><path d="M5 2l24 3-2.500 20L4 22z" fill="#1822b4" /><path d="M15 3l14 2-2.500 20-5-1z" fill="#6d87e6" /><circle cx="27" cy="28" r="8" fill="#e9ebea" stroke="#aaa" /><path d="M23 25l3 3-3 3M31 24l-3 3 3 3" stroke="#3a9c38" strokeWidth="2" fill="none" /></svg>
      </TaskIcon>
      <div className="ml-auto flex items-center text-white">
        <div className="flex w-[36px] justify-center"><svg width="18" height="10" viewBox="0 0 18 10" fill="none" stroke="#fff" strokeWidth="1.400"><path d="M.5 9.500L9 1l8.500 8.500" /></svg></div>
        <div className="flex w-[36px] justify-center"><svg className="mt-[4px]" width="24" height="20" viewBox="0 0 24 20"><path d="M4 16q-4-1-4-4t4-4Q6 0 12 0t8 7q4 1 4 5t-4 4z" fill="#a9adb3" /><path d="M4 16q-4-1-4-4t4-4 6 2l8 6z" fill="#dcdfe3" /><circle cx="17.500" cy="13.500" r="6.500" fill="#fff" /><path d="M13.500 13.500a4 4 0 0 1 7-2.500M21.500 13.500a4 4 0 0 1-7 2.500" stroke="#1176cf" strokeWidth="1.700" fill="none" /></svg></div>
        <div className="flex w-[37px] justify-center"><svg width="24" height="18" viewBox="0 0 24 18" fill="none" stroke="#fff" strokeWidth="1.300"><path d="M8 4h14v11H5v-5M22 7h1.500v5H22M1 3h6v4q-3 3-6 0zM2.500 3V0M5.500 3V0M4 9v6h2" /><rect x="8" y="6.500" width="11.500" height="6.500" fill="#fff" stroke="none" /></svg></div>
        <div className="flex w-[36px] justify-center"><svg width="20" height="20" viewBox="0 0 20 20" fill="none" stroke="#fff" strokeWidth="1.200"><path d="M1 19A18 18 0 0 1 19 1M5.500 19A13.500 13.500 0 0 1 19 5.500M10 19a9 9 0 0 1 9-9M14 19q0-4 5-5" opacity=".85" /><circle cx="17.500" cy="17.500" r="1.500" fill="#fff" stroke="none" /></svg></div>
        <div className="flex w-[33px] justify-center"><svg width="23" height="20" viewBox="0 0 23 20" fill="none" stroke="#fff" strokeWidth="1.300"><path d="M1 6.500h3.500L9 1.500v17l-4.500-5H1zM12.500 7q2 3 0 6M15.500 4.500q3.500 5.500 0 11" /><path d="M18.500 2q5 8 0 16" opacity=".5" /></svg></div>
        <Fit w={34} className="ml-[13px] text-[16.500px]">ENG</Fit>
        <div className="ml-[21px] flex w-[102px] flex-col items-center text-[16.500px] leading-[28px]">
          <Fit w={64}>1:46 PM</Fit>
          <Fit w={102}>Oct 17, 2023</Fit>
        </div>
        <div className="relative ml-[29px] h-[44px] w-[38px]">
          <svg width="38" height="44" viewBox="0 0 38 44"><path d="M0 9h24v18H16v6l-6-6H0z" fill="#fff" /><path d="M5 14.500h14M5 18.500h14M5 22.500h14" stroke="#1c2b42" strokeWidth="1.400" /><circle cx="23.500" cy="32" r="11" fill="#2a2e33" stroke="#8b9096" strokeWidth="1.200" /></svg>
          <span className="absolute left-[18.500px] top-[21px] text-[17px] font-bold leading-[22px]">2</span>
        </div>
        <span className="ml-[17px] mr-[6px] h-[60px] w-[1px] bg-[#7b8494]" />
      </div>
    </div>
  );
}

export default function App() {
  return (
    <div className="relative h-[1080px] w-[1920px] overflow-hidden bg-[#f7f7f7] font-['Open_Sans','Noto_Sans',sans-serif]">
      <TabStrip />
      <Toolbar />
      <div className="flex h-[915px]">
        <div className="ml-[6px] h-[909px] w-[1849px] overflow-hidden rounded-[12px] border border-[#dedede] bg-white pt-[2px] font-[Lato,'Noto_Sans',sans-serif] shadow-sm">
          <Banner />
          <CompanyBar />
          <div className="flex h-[19px] items-center pl-[67px] text-[14.500px] font-bold text-[#0b3fa0]"><Fit w={110}>Welcome to S3G</Fit></div>
          <Workspace />
          <FooterBar />
        </div>
        <EdgeSidebar />
      </div>
      <Taskbar />
      <Toast />
    </div>
  );
}
